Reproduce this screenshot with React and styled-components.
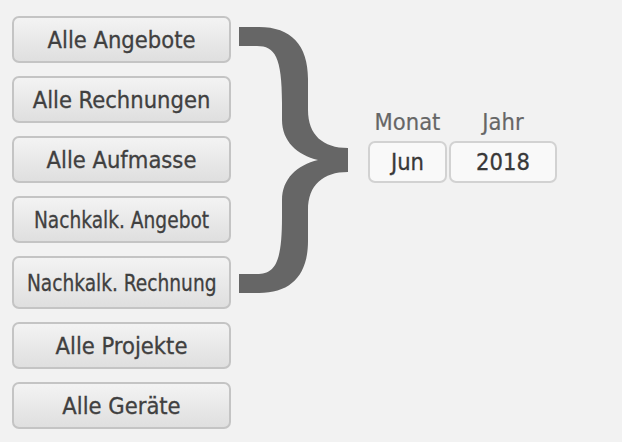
import React from 'react';
import styled, { createGlobalStyle } from 'styled-components';

const GlobalStyle = createGlobalStyle`
    html, body {
        margin: 0;
        padding: 0;
        background: #f2f2f2;
    }
    body {
        font-family: "DejaVu Sans Condensed", "DejaVu Sans", sans-serif;
        color: #444;
    }
`;

const buttons = [
    { label: 'Alle Angebote' },
    { label: 'Alle Rechnungen' },
    { label: 'Alle Aufmasse' },
    { label: 'Nachkalk. Angebot', narrow: true },
    { label: 'Nachkalk. Rechnung', narrow: true, tall: true },
    { label: 'Alle Projekte' },
    { label: 'Alle Geräte' },
];

const Brace = () => (
    <BraceSvg width="109" height="266" viewBox="0 0 109 266">
        <path
            fill="#666"
            d="M0,0 H20 C52,0 69,18 69,52 V83 C69,108 84,121 109,121 V145 C84,145 69,158 69,183 V214 C69,248 52,266 20,266 H0 V247 H18 C36,247 43,236 43,190 V173 C43,152 58,138 79,133 C58,128 43,114 43,93 V76 C43,30 36,19 18,19 H0 Z"
        />
    </BraceSvg>
);

export default function App() {
    return (
        <>
            <GlobalStyle />
            <Page>
                <ButtonColumn>
                    {buttons.map((b) => (
                        <MenuButton key={b.label} $tall={b.tall}>
                            <ButtonText $narrow={b.narrow}>{b.label}</ButtonText>
                        </MenuButton>
                    ))}
                </ButtonColumn>
                <Brace />
                <DateGroup>
                    <DateField>
                        <FieldLabel>Monat</FieldLabel>
                        <FieldBox $width={79}>Jun</FieldBox>
                    </DateField>
                    <DateField>
                        <FieldLabel>Jahr</FieldLabel>
                        <FieldBox $width={108}>2018</FieldBox>
                    </DateField>
                </DateGroup>
            </Page>
        </>
    );
}

const Page = styled.div`
    width: 622px;
    height: 442px;
    box-sizing: border-box;
    padding: 16px 0 0 12px;
    display: flex;
    align-items: flex-start;
`;

const ButtonColumn = styled.div`
    display: flex;
    flex-direction: column;
    gap: 13px;
    width: 219px;
`;

const MenuButton = styled.button`
    height: ${(p) => (p.$tall ? '53px' : '47px')};
    box-sizing: border-box;
    padding: 0;
    border: 2px solid #c4c4c4;
    border-radius: 7px;
    background: linear-gradient(to bottom, #f3f3f3, #dfdfdf);
    display: flex;
    align-items: center;
    justify-content: center;
    font-family: inherit;
    font-size: 23.5px;
    color: #404040;
    -webkit-text-stroke: 0.3px #404040;
    cursor: pointer;
`;

const ButtonText = styled.span`
    display: inline-block;
    white-space: nowrap;
    transform: ${(p) => (p.$narrow ? 'scaleX(0.88)' : 'none')};
`;

const BraceSvg = styled.svg`
    display: block;
    margin: 11px 0 0 8px;
`;

const DateGroup = styled.div`
    display: flex;
    gap: 2px;
    margin: 93px 0 0 20px;
`;

const DateField = styled.div`
    display: flex;
    flex-direction: column;
    align-items: center;
`;

const FieldLabel = styled.div`
    font-size: 23.5px;
    line-height: 27px;
    color: #666;
    -webkit-text-stroke: 0.2px #666;
    margin-bottom: 5px;
`;

const FieldBox = styled.div`
    width: ${(p) => p.$width}px;
    height: 42px;
    box-sizing: border-box;
    border: 2px solid #d2d2d2;
    border-radius: 7px;
    background: #f9f9f9;
    display: flex;
    align-items: center;
    justify-content: center;
    font-size: 23.5px;
    color: #383838;
    -webkit-text-stroke: 0.3px #383838;
`;
